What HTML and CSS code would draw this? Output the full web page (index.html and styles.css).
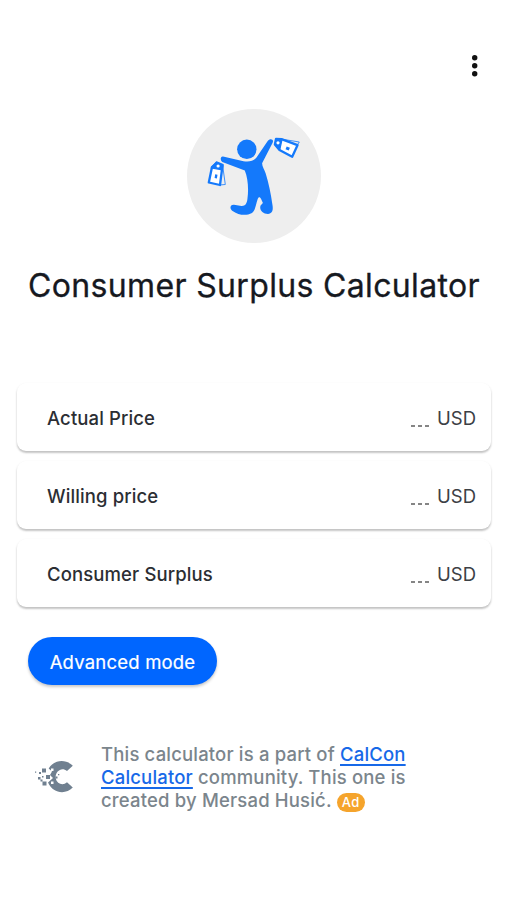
FILE: index.html
```html
<!DOCTYPE html>
<html lang="en">
<head>
<meta charset="utf-8">
<title>Consumer Surplus Calculator</title>
<link rel="stylesheet" href="styles.css">
</head>
<body>
<header class="topbar">
  <button class="menu" aria-label="Menu">
    <svg width="8" height="24" viewBox="0 0 8 24"><circle cx="3.7" cy="3.7" r="2.7"/><circle cx="3.7" cy="11.7" r="2.7"/><circle cx="3.7" cy="19.7" r="2.7"/></svg>
  </button>
</header>
<main>
  <svg class="hero" viewBox="7.5 9 134 134" width="134" height="134">
    <circle cx="74.5" cy="76" r="67" fill="#eee"/>
    <g fill="#1479fb">
      <circle cx="67.3" cy="49.3" r="9.7"/>
      <path d="M43.5 56.5C41 56 40.3 60 42.8 62L65.3 70.5C68.5 78 69.2 89 68 98.3C67.5 104 65.5 106.2 62 106L54.5 104.7C50.2 104.4 49.8 109 53.5 111.2C59 115.1 66.5 116.2 72.5 113C76 110.5 76.2 104.5 78.3 98.8C79.2 96.8 80.5 96.8 81.6 99L83.4 103L81.1 105.5C79.5 109.8 83 114 88.5 114C93.5 113.5 93.8 109 92.8 104C91.5 94 89.2 83.5 86.2 73.5C85 69.5 82.6 66.5 82.6 63.2L93 43C95 39.2 90.5 38 88.2 41L77 57.5C73.5 61.8 69 61.8 64 61.3Z"/>
    </g>
    <g fill="none" stroke="#1479fb" stroke-linejoin="round">
      <path d="M43.2 66L45.8 84.5L40 85" stroke-width=".8"/>
      <path d="M36.6 63.5L43 65.5L40.5 85L29.3 82.5L32.5 67Z" fill="#fff" stroke-width="2.3"/>
      <path d="M32.3 67L37 61.8L43.6 64.5L42.7 69.8L31.8 68Z" fill="#1479fb" stroke-width="1.2"/>
      <path d="M99 38.6L119.8 42L116.5 47" stroke-width=".8"/>
      <path d="M96.5 39L102 39.2L118 45.2L112.7 56.7L100 50L95.4 44.5Z" fill="#fff" stroke-width="2.3"/>
      <path d="M96.5 39L102.5 39.5L100.3 49.5L95.4 44.5Z" fill="#1479fb" stroke-width="1.2"/>
    </g>
    <circle cx="38.6" cy="66" r="1.6" fill="#fff"/><circle cx="98.5" cy="42.8" r="1.6" fill="#fff"/>
    <path d="M35.7 74.3l2.3.4-.6 3.8-2.3-.4zM107.2 46.5l3.2 1.2-1.2 2.8-3.2-1.2z" fill="#1479fb"/>
  </svg>
  <h1>Consumer Surplus Calculator</h1>
  <section class="fields">
    <div class="card"><span class="label">Actual Price</span><span class="value"><span class="dots"><i></i><i></i><i></i></span>USD</span></div>
    <div class="card"><span class="label">Willing price</span><span class="value"><span class="dots"><i></i><i></i><i></i></span>USD</span></div>
    <div class="card"><span class="label">Consumer Surplus</span><span class="value"><span class="dots"><i></i><i></i><i></i></span>USD</span></div>
  </section>
  <button class="mode">Advanced mode</button>
</main>
<footer>
  <svg class="logo" width="50" height="50" viewBox="0 0 50 50" fill="#708090">
    <path d="M42.8 15.8C35.5 8.5 23.5 10 18.7 18.5L22 21.5L20 25L23 28L18 32.5C23 43.5 35.5 45 42.8 37.5L37 32.3C33 36 27 34 25.8 28.5C24.5 22.5 31 16 37 21Z"/>
    <path d="M12 18.5h4v4h-4zM16 25h4v4h-4zM12.5 31.5h4v4h-4zM9 22h2v2H9zM8 27h2.5v2.5H8zM12 26h1.5v1.5H12zM5 21.5h1.2v1.2H5zM10.5 29.5h2v2h-2zM25.5 26.5h2v2h-2zM28 24h1.3v1.3H28z"/>
    <path d="M21 18.5h2.5v2.5H21zM21 31.5h2.5v2.5H21z" fill="#fff"/>
  </svg>
  <p>This calculator is a part of <a href="#">CalCon</a><br><a href="#">Calculator</a> community. This one is<br>created by Mersad Husić. <span class="ad">Ad</span></p>
</footer>
</body>
</html>
```

FILE: styles.css
```css
* { box-sizing: border-box; }
body { margin: 0; background: #fff; color: #16191f; font-family: Inter, "Liberation Sans", sans-serif; }
button { border: 0; font: inherit; }
.topbar { display: flex; justify-content: flex-end; height: 109px; padding: 54px 28px 0 0; }
.menu { padding: 0; background: none; width: 8px; height: 24px; }
.menu svg { display: block; fill: #111; }
.hero { display: block; margin: 0 auto; }
h1 { margin: 23px 0 0; padding-left: 1px; text-align: center; font-size: 32px; line-height: 40px; font-weight: 400; letter-spacing: .34px; -webkit-text-stroke: .3px #16191f; white-space: nowrap; }
.fields { display: grid; gap: 10px; margin: 77px 16px 0 17px; }
.card { display: flex; justify-content: space-between; align-items: center; height: 68px; padding: 2px 15px 0 30px; border-radius: 9px; background: #fff; box-shadow: 0 2px 2px rgba(0,0,0,.2), 0 1px 3px rgba(0,0,0,.07); font-size: 18.5px; }
.label { font-weight: 500; letter-spacing: .12px; color: #2b2e33; }
.value { display: flex; align-items: center; color: #3c4045; }
.dots { display: flex; gap: 3px; margin: 16px 8px 0 0; }
.dots i { width: 4px; height: 2px; background: #858585; }
.mode { display: block; width: 189px; height: 48px; margin: 30px 0 0 28px; padding: 2px 0 0; border-radius: 24px; background: #0066ff; color: #fff; font-size: 18.5px; letter-spacing: .2px; -webkit-text-stroke: .2px #fff; box-shadow: 0 2px 3px rgba(0,0,0,.22); }
footer { display: flex; margin: 58px 0 0 30px; }
.logo { margin-top: 7px; }
footer p { margin: 0 0 0 21px; font-size: 18.5px; line-height: 23px; font-weight: 500; letter-spacing: .17px; color: #7b858c; white-space: nowrap; }
footer a { color: #1769e8; text-underline-offset: 3px; text-decoration-thickness: 1.5px; }
.ad { display: inline-flex; align-items: center; justify-content: center; width: 28px; height: 19px; border-radius: 10px; background: #f5a42c; color: #fff; font-size: 13px; line-height: 19px; }
```
